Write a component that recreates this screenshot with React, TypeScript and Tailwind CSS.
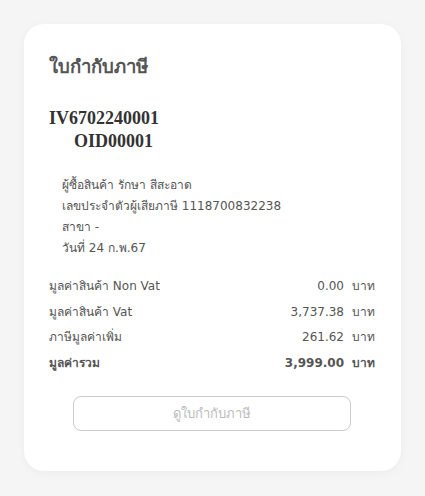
import React from "react";

const rows = [
    { label: "มูลค่าสินค้า Non Vat", value: "0.00" },
    { label: "มูลค่าสินค้า Vat", value: "3,737.38" },
    { label: "ภาษีมูลค่าเพิ่ม", value: "261.62" },
];

export default function App() {
    return (
        <main className="w-full min-h-screen bg-[#f5f5f5] p-6 font-['DejaVu_Sans',sans-serif]">
            <div className="w-[377px] h-[447px] bg-white rounded-[20px] shadow-[0_2px_10px_rgba(0,0,0,0.04)] pl-[25px] pr-[26px] pt-[30px]">
                <h1 className="text-[18.5px] font-bold text-[#555] leading-[26px]">ใบกำกับภาษี</h1>

                <div className="mt-[27px] font-['Liberation_Serif',serif] font-bold text-[18px] text-[#333] leading-[23px]">
                    <div>IV6702240001</div>
                    <div className="pl-[25px]">OID00001</div>
                </div>

                <div className="mt-[22px] pl-[13px] text-[12px] text-[#555] leading-[21px]">
                    <div>ผู้ซื้อสินค้า รักษา สีสะอาด</div>
                    <div>เลขประจำตัวผู้เสียภาษี 1118700832238</div>
                    <div>สาขา -</div>
                    <div>วันที่ 24 ก.พ.67</div>
                </div>

                <div className="mt-[14px] text-[12px] text-[#555]">
                    {rows.map((r) => (
                        <div key={r.label} className="flex justify-between h-[25.7px] items-center">
                            <span>{r.label}</span>
                            <span>
                                {r.value}
                                <span className="ml-[8px]">บาท</span>
                            </span>
                        </div>
                    ))}
                    <div className="flex justify-between h-[25.7px] items-center font-bold">
                        <span>มูลค่ารวม</span>
                        <span>
                            3,999.00
                            <span className="ml-[8px]">บาท</span>
                        </span>
                    </div>
                </div>

                <div className="mt-[20px] flex justify-center">
                    <button type="button" className="w-[278px] h-[35px] border border-[#ccc] rounded-[8px] text-[13px] text-[#bbb]">
                        ดูใบกำกับภาษี
                    </button>
                </div>
            </div>
        </main>
    );
}
